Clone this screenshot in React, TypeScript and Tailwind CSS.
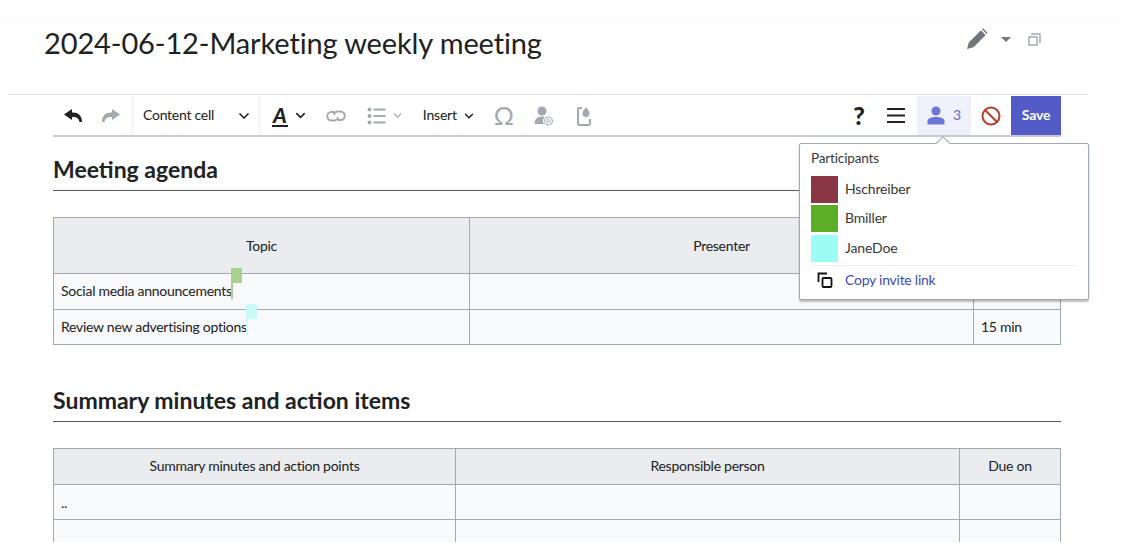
import { ChevronDown } from "lucide-react";

const font = { fontFamily: "Lato, 'Noto Sans', sans-serif" };

function Sep() {
  return <div className="w-px h-[39px] bg-[#eaecf0]" />;
}

function Chevron({ className }: { className: string }) {
  return <ChevronDown strokeWidth={2.5} className={className} />;
}

function UndoIcon({ color, flip }: { color: string; flip?: boolean }) {
  return (
    <svg width="20" height="20" viewBox="0 0 20 20" className={flip ? "-scale-x-100" : ""}>
      <path d="M1 8.500 9 3v3.500h1c5 0 9 3 9 9.500h-2.500c-.5-3-2.500-5-6.500-5H9V14z" fill={color} />
    </svg>
  );
}

function Toolbar() {
  return (
    <div className="ml-[53px] w-[1008px] h-[41px] border-b-2 border-[#c8ccd1] flex items-center relative">
      <div className="w-[79px] flex items-center pl-[10px] gap-[18px] h-full">
        <UndoIcon color="#202122" />
        <UndoIcon color="#a2a9b1" flip />
      </div>
      <Sep />
      <div className="w-[126px] flex items-center justify-between pl-[10px] pr-[7px] text-[14px] tracking-[-0.25px] text-[#202122]">
        <span className="-mt-[2px]">Content cell</span>
        <Chevron className="w-[16px] h-[16px] text-[#202122]" />
      </div>
      <Sep />
      <div className="flex items-center ml-[12px]">
        <span className="text-[21px] leading-[21px] italic font-black text-[#202122] border-b-2 border-[#202122] px-px">A</span>
        <Chevron className="w-[15px] h-[15px] ml-[5px] text-[#202122]" />
      </div>
      <svg width="20" height="20" viewBox="0 0 20 20" fill="none" stroke="#a2a9b1" strokeWidth="2" className="ml-[18px]">
        <path d="M8 6H5.500a4.200 4.200 0 0 0 0 8.500H9a4 4 0 0 0 3-3.500" />
        <path d="M12 14h2.500a4.200 4.200 0 0 0 0-8.500H11a4 4 0 0 0-3 3.500" />
      </svg>
      <svg width="20" height="20" viewBox="0 0 20 20" fill="#a2a9b1" className="ml-[21px]">
        <circle cx="2.500" cy="3.500" r="2" />
        <circle cx="2.500" cy="10" r="2" />
        <circle cx="2.500" cy="16.500" r="2" />
        <rect x="6.500" y="2.500" width="12" height="2" />
        <rect x="6.500" y="9" width="12" height="2" />
        <rect x="6.500" y="15.500" width="12" height="2" />
      </svg>
      <Chevron className="w-[13px] h-[13px] ml-[4px] text-[#a2a9b1]" />
      <span className="ml-[19px] -mt-[2px] text-[14px] tracking-[-0.2px] text-[#202122]">Insert</span>
      <Chevron className="w-[14px] h-[14px] ml-[5px] text-[#202122]" />
      <span className="ml-[18px] w-[20px] text-center text-[25px] leading-none text-[#a2a9b1]">Ω</span>
      <svg width="20" height="22" viewBox="0 0 20 22" fill="#a2a9b1" className="ml-[20px]">
        <circle cx="8" cy="6" r="4.500" />
        <path d="M0.500 19c0-5 3-7.500 7.500-7.500 2 0 3.500.5 4.500 1.500-1.500 1.500-2.500 4-1.500 6z" />
        <circle cx="14.500" cy="16" r="5.500" fill="#fff" stroke="none" />
        <circle cx="14.500" cy="16" r="4" fill="none" stroke="#a2a9b1" strokeWidth="1" />
        <circle cx="14.500" cy="16" r="1.500" fill="none" stroke="#a2a9b1" strokeWidth="1" />
      </svg>
      <svg width="18" height="22" viewBox="0 0 18 22" fill="none" className="ml-[22px]">
        <path d="M6 3H3.500a1.500 1.500 0 0 0-1.500 1.500v14A1.500 1.500 0 0 0 3.500 20h9a1.500 1.500 0 0 0 1.500-1.500V14" stroke="#a2a9b1" strokeWidth="2" />
        <path d="M10 2c1.500 2.500 3.500 4 3.500 6.500a3.500 3.500 0 0 1-7 0C6.500 6 8.500 4.500 10 2z" fill="#a2a9b1" />
      </svg>

      <div className="ml-auto flex items-center h-full">
        <span className="w-[20px] text-center text-[25px] leading-none font-black text-[#202122]">?</span>
        <svg width="18" height="15" viewBox="0 0 18 15" fill="#202122" className="ml-[18px]">
          <rect y="0" width="18" height="2" />
          <rect y="6.500" width="18" height="2" />
          <rect y="13" width="18" height="2" />
        </svg>
        <div className="ml-[12px] w-[54px] h-[39px] bg-[#eff0fa] flex items-center pl-[10px]">
          <svg width="18" height="19" viewBox="0 0 18 19" fill="#6b77d6">
            <circle cx="9" cy="5" r="4.500" />
            <path d="M0.500 18.500v-3c0-3 3-4.500 8.500-4.500s8.500 1.500 8.500 4.500v3z" />
          </svg>
          <span className="ml-[8px] -mt-[2px] text-[14px] text-[#5e6ad0]">3</span>
        </div>
        <svg width="20" height="20" viewBox="0 0 20 20" fill="none" stroke="#bf3c2c" strokeWidth="2" className="ml-[10px]">
          <circle cx="10" cy="10" r="8.500" />
          <path d="M4 4l12 12" />
        </svg>
        <div className="ml-[10px] w-[50px] h-[39px] bg-[#525bc7] flex items-center justify-center pb-[2px] text-[14px] tracking-[-0.2px] font-bold text-white">
          Save
        </div>
      </div>

      <Participants />
    </div>
  );
}

function Participants() {
  const people = [
    { name: "Hschreiber", color: "bg-[#8a3644]", h: "h-[27px] mb-[2px]" },
    { name: "Bmiller", color: "bg-[#5dae27]", h: "h-[27px] mb-[3px]" },
    { name: "JaneDoe", color: "bg-[#9cfdf5]", h: "h-[27px]" },
  ];
  return (
    <div className="absolute z-10 left-[746px] top-[47px] w-[290px] h-[157px] bg-white border border-[#a2a9b1] rounded-[2px] shadow-[0_2px_2px_rgba(0,0,0,0.25)] pl-[11px] pr-[10px] pt-[6px] tracking-[-0.15px]">
      <div className="absolute -top-[6px] left-[138px] w-[10px] h-[10px] rotate-45 bg-white border-l border-t border-[#a2a9b1]" />
      <div className="text-[13.500px] leading-[17px] text-[#36383a]">Participants</div>
      <div className="mt-[9px]">
        {people.map((p) => (
          <div key={p.name} className={`flex items-center ${p.h}`}>
            <div className={`w-[27px] h-[27px] ${p.color}`} />
            <span className="ml-[7px] -mt-[2px] text-[14px] text-[#36383a]">{p.name}</span>
          </div>
        ))}
      </div>
      <div className="mt-[3px] mr-px border-t border-[#eaecf0] flex items-center pt-[3px]">
        <svg width="18" height="18" viewBox="0 0 18 18" fill="none" stroke="#101112" strokeWidth="1.800" className="ml-[5px]">
          <path d="M11 2.500H2.500V11" />
          <rect x="6.500" y="7" width="9" height="9" rx="1" />
        </svg>
        <span className="ml-[11px] text-[14px] tracking-[-0.25px] text-[#3f4bb3]">Copy invite link</span>
      </div>
    </div>
  );
}

function Caret({ color }: { color: string }) {
  return (
    <span className="relative inline-block w-0 align-baseline">
      <span className={`absolute -left-px w-[2px] h-[17px] ${color} -top-[14px]`} />
      <span className={`absolute -left-px w-[11px] h-[15px] ${color} -top-[28px]`} />
    </span>
  );
}

const cell = "border border-[#a2a9b1] px-[7px] text-[14px] tracking-[-0.27px] font-normal text-[#202122]";

function AgendaTable() {
  return (
    <table className="w-[1007px] table-fixed border-collapse">
      <colgroup>
        <col className="w-[416px]" />
        <col className="w-[504px]" />
        <col className="w-[87px]" />
      </colgroup>
      <thead>
        <tr className="h-[56px] bg-[#eaecf0]">
          <th className={cell}>Topic</th>
          <th className={cell}>Presenter</th>
          <th className={cell}></th>
        </tr>
      </thead>
      <tbody className="bg-[#f8f9fa]">
        <tr className="h-[36px]">
          <td className={cell}>
            <span className="relative top-[-1px]">
              Social media announcements
              <Caret color="bg-[#a9d18e]" />
            </span>
          </td>
          <td className={cell}></td>
          <td className={cell}></td>
        </tr>
        <tr className="h-[35px]">
          <td className={cell}>
            <span className="relative top-[-1px]">
              Review new advertising options
              <Caret color="bg-[#c9faf7]" />
            </span>
          </td>
          <td className={cell}></td>
          <td className={`${cell} pb-[2px]`}>15 min</td>
        </tr>
      </tbody>
    </table>
  );
}

function SummaryTable() {
  return (
    <table className="w-[1007px] table-fixed border-collapse">
      <colgroup>
        <col className="w-[402px]" />
        <col className="w-[504px]" />
        <col className="w-[101px]" />
      </colgroup>
      <thead>
        <tr className="h-[36px] bg-[#eaecf0]">
          <th className={`${cell} pb-[2px]`}>Summary minutes and action points</th>
          <th className={`${cell} pb-[2px]`}>Responsible person</th>
          <th className={`${cell} pb-[2px]`}>Due on</th>
        </tr>
      </thead>
      <tbody className="bg-[#f8f9fa]">
        <tr className="h-[35px]">
          <td className={cell}>..</td>
          <td className={cell}></td>
          <td className={cell}></td>
        </tr>
        <tr className="h-[35px]">
          <td className={cell}></td>
          <td className={cell}></td>
          <td className={cell}></td>
        </tr>
      </tbody>
    </table>
  );
}

export default function App() {
  return (
    <div className="h-[552px] bg-white overflow-hidden" style={font}>
      <div className="h-[542px] overflow-hidden">
        <div className="w-[1120px] h-[18px] border-b border-[#f8f9fa]" />
        <div className="h-[76px] flex items-start justify-between pl-[44px] pr-[97px]">
          <h1 className="mt-[6px] text-[29px] tracking-[-0.13px] leading-[38px] text-[#202122]">2024-06-12-Marketing weekly meeting</h1>
          <div className="flex items-center mt-[10px] text-[#72777d]">
            <svg width="22" height="22" viewBox="0 0 22 22" fill="#72777d">
              <path d="M1 21l1.800-6.500L15 2.300l4.700 4.700L7.500 19.200z" />
              <path d="M16 1.300l1-1 4.700 4.700-1 1z" />
            </svg>
            <div className="ml-[13px] w-0 h-0 border-x-[5px] border-x-transparent border-t-[5px] border-t-[#72777d]" />
            <svg width="13" height="13" viewBox="0 0 13 13" fill="none" stroke="#a2a9b1" strokeWidth="1.500" className="ml-[17px]">
              <path d="M4 2V1h8v8h-1" />
              <path d="M1 4h8v8H1z" />
            </svg>
          </div>
        </div>
        <div className="ml-[8px] w-[1080px] h-px bg-[#dcdfe3]" />
        <div className="mt-[1px]">
          <Toolbar />
        </div>
        <div className="ml-[53px] w-[1008px]">
          <h2 className="mt-[17px] h-[37px] border-b border-[#54595d] text-[23px] leading-[30px] font-bold text-[#202122]">Meeting agenda</h2>
          <div className="mt-[26px]">
            <AgendaTable />
          </div>
          <h2 className="mt-[40px] h-[37px] border-b border-[#54595d] text-[23px] leading-[30px] font-bold text-[#202122]">Summary minutes and action items</h2>
          <div className="mt-[26px]">
            <SummaryTable />
          </div>
        </div>
      </div>
    </div>
  );
}
